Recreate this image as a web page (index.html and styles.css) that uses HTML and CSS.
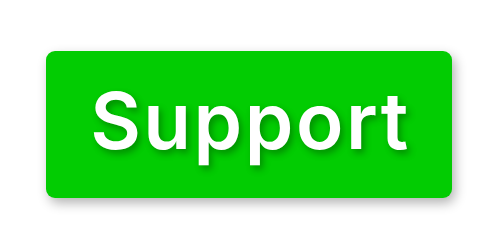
FILE: index.html
```html
<!DOCTYPE html>
<html>
<head>
<meta charset="utf-8">
<link rel="stylesheet" href="styles.css">
</head>
<body>
<div class="stage">
  <button class="support">Support</button>
</div>
</body>
</html>
```
FILE: styles.css
```css
html, body {
  margin: 0;
  padding: 0;
  background: #ffffff;
}
.stage {
  width: 500px;
  height: 250px;
  display: flex;
  align-items: flex-start;
  padding: 51px 0 0 46px;
  box-sizing: border-box;
}
.support {
  width: 406px;
  height: 147px;
  border: none;
  border-radius: 9px;
  background: #02cc02;
  color: #ffffff;
  font-family: "Inter", "DejaVu Sans", sans-serif;
  font-weight: 600;
  font-size: 78px;
  letter-spacing: 2.5px;
  display: flex;
  align-items: center;
  justify-content: center;
  padding: 0 0 8px 3px;
  box-shadow: 3px 5px 12px rgba(0, 0, 0, 0.3);
  text-shadow: 3px 4px 7px rgba(0, 0, 0, 0.3);
}
```
